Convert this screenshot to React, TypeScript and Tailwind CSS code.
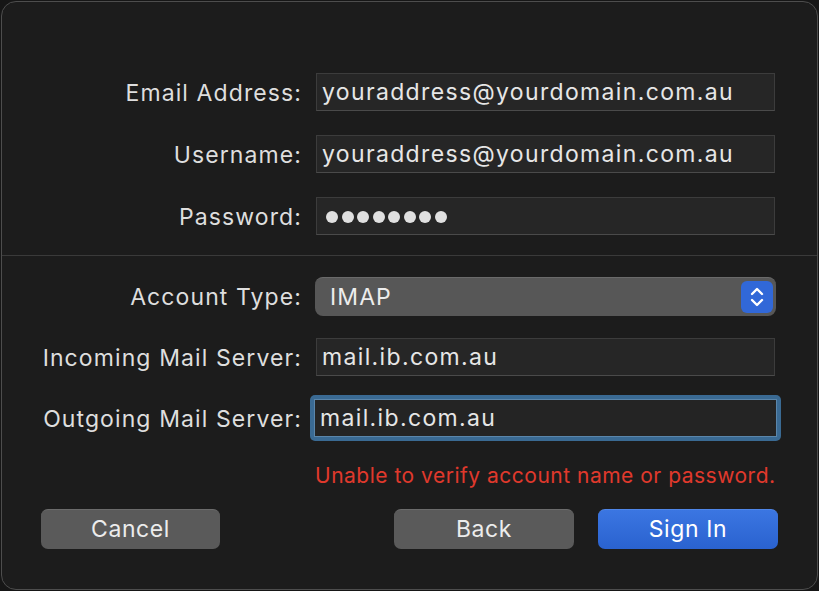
import React from "react";

const Label = ({ children }: { children: React.ReactNode }) => (
  <div className="w-[300px] shrink-0 text-right text-[23px] tracking-[1.1px] leading-[28px] text-[#dedede] whitespace-nowrap pt-px">{children}</div>
);

const Field = ({ children }: { children: React.ReactNode }) => (
  <div className="ml-[14px] w-[459px] h-[38px] bg-[#262626] border border-[#3c3c3c] border-b-[#4a4a4a] flex items-center px-[5px] pt-px text-[23px] tracking-[1.35px] text-[#e6e6e6]">
    {children}
  </div>
);

export default function App() {
  return (
    <div className="w-[819px] h-[591px] bg-[#161616] p-px font-['Inter',sans-serif]">
      <div className="h-[589px] w-[817px] rounded-[15px] border border-[#4d4d4d] bg-[#1c1c1c] flex flex-col overflow-hidden">
        <div className="pt-[71px] flex flex-col gap-[24px]">
          <div className="flex items-center">
            <Label>Email Address:</Label>
            <Field>youraddress@yourdomain.com.au</Field>
          </div>
          <div className="flex items-center">
            <Label>Username:</Label>
            <Field>youraddress@yourdomain.com.au</Field>
          </div>
          <div className="flex items-center">
            <Label>Password:</Label>
            <Field>
              <div className="flex gap-[3.5px] pl-[4px]">
                {Array.from({ length: 8 }).map((_, i) => (
                  <div key={i} className="w-[12px] h-[12px] rounded-full bg-[#e0e0e0]" />
                ))}
              </div>
            </Field>
          </div>
        </div>
        <div className="mt-[20px] h-px bg-[#3a3a3a]" />
        <div className="mt-[21px] flex items-center">
          <Label>Account Type:</Label>
          <div className="ml-[13px] w-[461px] h-[39px] rounded-[8px] bg-[#575757] border-t border-[#6a6a6a] flex items-center justify-between pl-[15px] pr-[3px]">
            <span className="text-[23px] tracking-[1.1px] text-[#ececec]">IMAP</span>
            <div className="w-[32px] h-[32px] rounded-[6px] bg-[#3168d8] flex items-center justify-center">
              <svg width="16" height="24" viewBox="0 0 16 24" fill="none" stroke="white" strokeWidth="2.4" strokeLinecap="round" strokeLinejoin="round">
                <path d="M3 9 L8 4 L13 9" />
                <path d="M3 15 L8 20 L13 15" />
              </svg>
            </div>
          </div>
        </div>
        <div className="mt-[22px] flex items-center">
          <Label>Incoming Mail Server:</Label>
          <Field>mail.ib.com.au</Field>
        </div>
        <div className="mt-[19px] flex items-center">
          <Label>Outgoing Mail Server:</Label>
          <div className="ml-[8px] w-[471px] h-[46px] rounded-[5px] bg-[#3a6a93] p-[4px] flex">
            <div className="flex-1 bg-[#242424] border border-[#5a86ab] flex items-center px-[5px] pt-px text-[23px] tracking-[1.35px] text-[#e6e6e6]">
              mail.ib.com.au
            </div>
          </div>
        </div>
        <div className="mt-[23px] pl-[313px] text-[21px] tracking-[0.5px] leading-[24px] text-[#e0392c] whitespace-nowrap">
          Unable to verify account name or password.
        </div>
        <div className="mt-[21px] flex items-center px-[39px]">
          <button className="w-[179px] h-[40px] rounded-[7px] bg-[#5a5a5a] border-t border-[#6b6b6b] text-[23px] tracking-[0.6px] text-[#ececec]">Cancel</button>
          <div className="flex-1" />
          <button className="w-[180px] h-[40px] rounded-[7px] bg-[#5a5a5a] border-t border-[#6b6b6b] text-[23px] tracking-[0.6px] text-[#ececec]">Back</button>
          <button className="ml-[24px] w-[180px] h-[40px] rounded-[7px] bg-gradient-to-b from-[#3b76e2] to-[#2a62cf] border-t border-[#4f86e8] text-[23px] tracking-[0.6px] text-white">Sign In</button>
        </div>
      </div>
    </div>
  );
}
